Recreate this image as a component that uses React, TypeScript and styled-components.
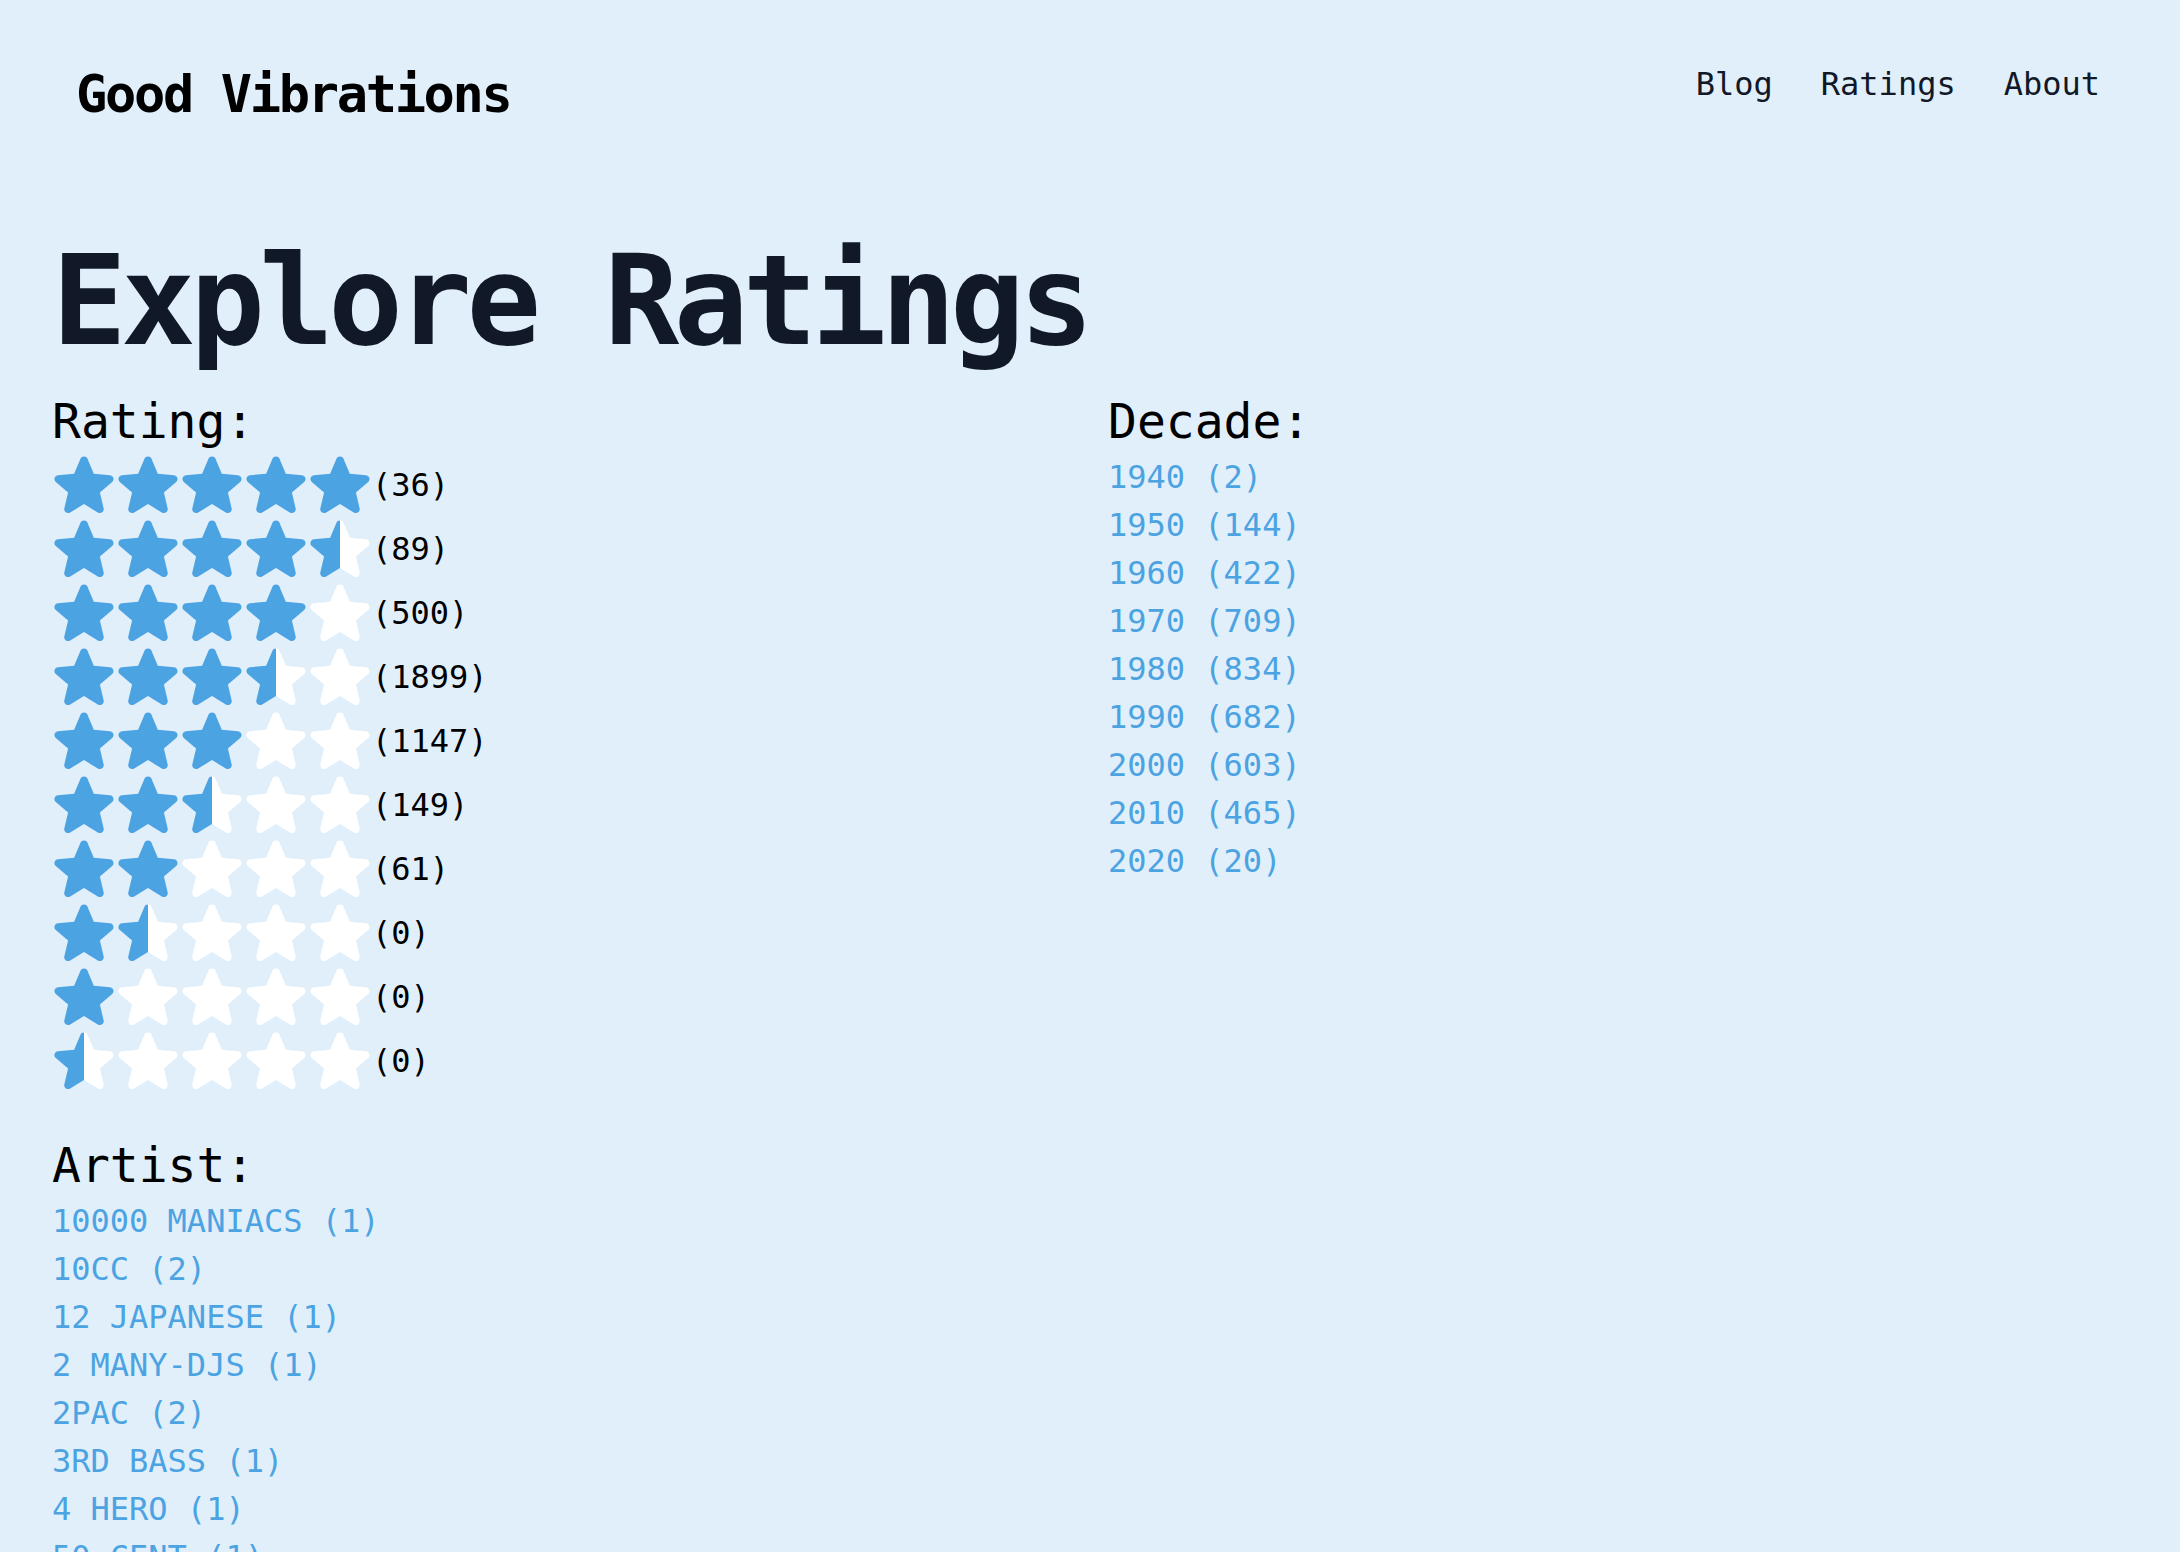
import styled, { createGlobalStyle } from 'styled-components'

const BLUE = '#4ca3e2'

const GlobalStyle = createGlobalStyle`
  body {
    margin: 0;
    background: #e1effb;
    font-family: "DejaVu Sans Mono", "Liberation Mono", monospace;
    color: #000;
  }
`

type StarFill = 'full' | 'half' | 'empty'

const STAR_PATH =
  'M10.788 3.21c.448-1.077 1.976-1.077 2.424 0l2.082 5.006 5.404.434c1.164.093 1.636 1.545.749 2.305l-4.117 3.527 1.257 5.273c.271 1.136-.964 2.033-1.96 1.425L12 18.354 7.373 21.18c-.996.608-2.231-.29-1.96-1.425l1.257-5.273-4.117-3.527c-.887-.76-.415-2.212.749-2.305l5.404-.434 2.082-5.005Z'

const ratings = [
  { value: 5, count: 36 },
  { value: 4.5, count: 89 },
  { value: 4, count: 500 },
  { value: 3.5, count: 1899 },
  { value: 3, count: 1147 },
  { value: 2.5, count: 149 },
  { value: 2, count: 61 },
  { value: 1.5, count: 0 },
  { value: 1, count: 0 },
  { value: 0.5, count: 0 },
]

const decades = [
  { year: 1940, count: 2 },
  { year: 1950, count: 144 },
  { year: 1960, count: 422 },
  { year: 1970, count: 709 },
  { year: 1980, count: 834 },
  { year: 1990, count: 682 },
  { year: 2000, count: 603 },
  { year: 2010, count: 465 },
  { year: 2020, count: 20 },
]

const artists = [
  { name: '10000 MANIACS', count: 1 },
  { name: '10CC', count: 2 },
  { name: '12 JAPANESE', count: 1 },
  { name: '2 MANY-DJS', count: 1 },
  { name: '2PAC', count: 2 },
  { name: '3RD BASS', count: 1 },
  { name: '4 HERO', count: 1 },
  { name: '50 CENT', count: 1 },
]

function starFills(value: number): StarFill[] {
  return [1, 2, 3, 4, 5].map((i) => {
    if (value >= i) return 'full'
    if (value >= i - 0.5) return 'half'
    return 'empty'
  })
}

function Star({ fill }: { fill: StarFill }) {
  const color = fill === 'full' ? BLUE : fill === 'empty' ? '#ffffff' : 'url(#star-half)'
  return (
    <StarSvg viewBox="1.28 1.23 21.45 21.45">
      {fill === 'half' && (
        <defs>
          <linearGradient id="star-half" x1="0" x2="1" y1="0" y2="0">
            <stop offset="50%" stopColor={BLUE} />
            <stop offset="50%" stopColor="#ffffff" />
          </linearGradient>
        </defs>
      )}
      <path d={STAR_PATH} fill={color} fillRule="evenodd" clipRule="evenodd" />
    </StarSvg>
  )
}

export default function App() {
  return (
    <>
      <GlobalStyle />
      <Header>
        <Logo href="#">Good Vibrations</Logo>
        <Nav>
          <NavLink href="#">Blog</NavLink>
          <NavLink href="#">Ratings</NavLink>
          <NavLink href="#">About</NavLink>
        </Nav>
      </Header>

      <Main>
        <Title>Explore Ratings</Title>

        <Filters>
          <FilterGroup>
            <FilterLabel>Rating:</FilterLabel>
            <LinkList>
              {ratings.map((r) => (
                <li key={r.value}>
                  <StarRow href="#">
                    {starFills(r.value).map((f, i) => (
                      <Star key={i} fill={f} />
                    ))}
                    <Count>({r.count})</Count>
                  </StarRow>
                </li>
              ))}
            </LinkList>
          </FilterGroup>

          <FilterGroup>
            <FilterLabel>Decade:</FilterLabel>
            <LinkList>
              {decades.map((d) => (
                <li key={d.year}>
                  <FilterLink href="#">
                    {d.year} ({d.count})
                  </FilterLink>
                </li>
              ))}
            </LinkList>
          </FilterGroup>

          <FilterGroup>
            <FilterLabel>Artist:</FilterLabel>
            <LinkList>
              {artists.map((a) => (
                <li key={a.name}>
                  <FilterLink href="#">
                    {a.name} ({a.count})
                  </FilterLink>
                </li>
              ))}
            </LinkList>
          </FilterGroup>
        </Filters>
      </Main>
    </>
  )
}

const Header = styled.header`
  display: flex;
  justify-content: space-between;
  align-items: flex-start;
  padding: 68px 80px 0 76px;
`

const Logo = styled.a`
  font-size: 52px;
  line-height: 1;
  font-weight: 700;
  letter-spacing: -0.045em;
  color: #000;
  text-decoration: none;
`

const Nav = styled.nav`
  display: flex;
  gap: 48px;
`

const NavLink = styled.a`
  font-size: 32px;
  line-height: 1;
  color: #111827;
  text-decoration: none;
`

const Main = styled.main`
  padding: 119px 48px 0 52px;
`

const Title = styled.h1`
  margin: 0 0 26px;
  font-size: 124px;
  line-height: 1;
  font-weight: 700;
  letter-spacing: -0.045em;
  color: #111827;
`

const Filters = styled.div`
  display: grid;
  grid-template-columns: 1fr 1fr;
  column-gap: 32px;
  row-gap: 40px;
  align-items: start;
`

const FilterGroup = styled.section``

const FilterLabel = styled.h2`
  margin: 0;
  font-size: 48px;
  line-height: 64px;
  font-weight: 400;
  color: #000;
`

const LinkList = styled.ul`
  list-style: none;
  margin: 0;
  padding: 0;
`

const FilterLink = styled.a`
  display: block;
  font-size: 32px;
  line-height: 48px;
  color: ${BLUE};
  text-decoration: none;
`

const StarRow = styled.a`
  display: flex;
  align-items: center;
  height: 64px;
  color: #000;
  text-decoration: none;
`

const StarSvg = styled.svg`
  width: 64px;
  height: 64px;
  flex-shrink: 0;
`

const Count = styled.span`
  font-size: 32px;
  line-height: 1;
`
